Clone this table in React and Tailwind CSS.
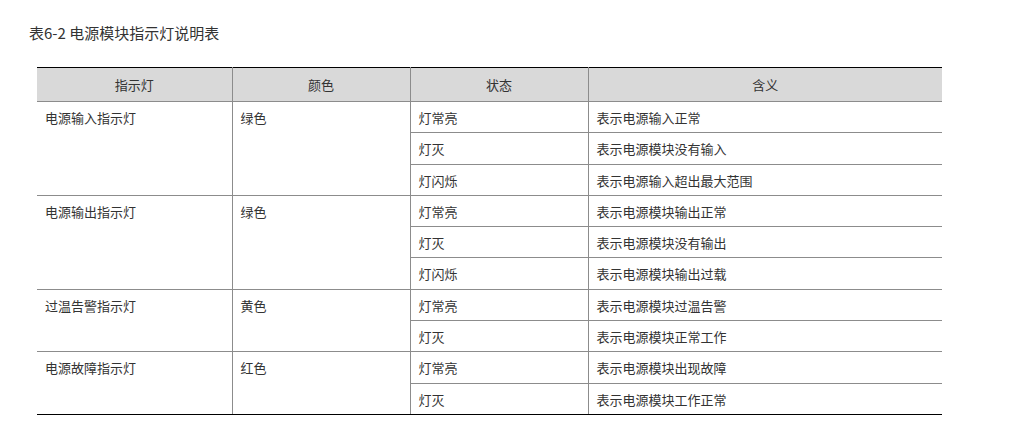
import React from 'react';

const groups = [
  {
    name: '电源输入指示灯',
    color: '绿色',
    rows: [
      ['灯常亮', '表示电源输入正常'],
      ['灯灭', '表示电源模块没有输入'],
      ['灯闪烁', '表示电源输入超出最大范围'],
    ],
  },
  {
    name: '电源输出指示灯',
    color: '绿色',
    rows: [
      ['灯常亮', '表示电源模块输出正常'],
      ['灯灭', '表示电源模块没有输出'],
      ['灯闪烁', '表示电源模块输出过载'],
    ],
  },
  {
    name: '过温告警指示灯',
    color: '黄色',
    rows: [
      ['灯常亮', '表示电源模块过温告警'],
      ['灯灭', '表示电源模块正常工作'],
    ],
  },
  {
    name: '电源故障指示灯',
    color: '红色',
    rows: [
      ['灯常亮', '表示电源模块出现故障'],
      ['灯灭', '表示电源模块工作正常'],
    ],
  },
];

const cell = 'border border-[#8c8c8c] px-2 align-top h-[31.3px] pt-[2px] leading-[28px]';

export default function App() {
  return (
    <div
      className="w-[1015px] h-[422px] bg-white text-[#333] text-[13px]"
      style={{ fontFamily: '"Noto Sans CJK SC", "Liberation Sans", sans-serif' }}
    >
      <div className="pt-[24px] pl-[29px] text-[15px] leading-[18px]">表6-2 电源模块指示灯说明表</div>
      <table className="ml-[37px] mt-[25px] w-[905px] border-collapse border-t-[1.5px] border-t-black border-b-[1.5px] border-b-black table-fixed">
        <colgroup>
          <col className="w-[195px]" />
          <col className="w-[178px]" />
          <col className="w-[178px]" />
          <col className="w-[354px]" />
        </colgroup>
        <thead>
          <tr className="bg-[#d9d9d9]">
            {['指示灯', '颜色', '状态', '含义'].map((h) => (
              <th
                key={h}
                className="border-x border-b border-x-[#8c8c8c] border-b-[#8c8c8c] border-t border-t-black font-normal h-[34px] text-center first:border-l-0 last:border-r-0"
              >
                {h}
              </th>
            ))}
          </tr>
        </thead>
        <tbody>
          {groups.map((g, gi) =>
            g.rows.map((r, ri) => {
              const last = gi === groups.length - 1 && ri === g.rows.length - 1;
              return (
                <tr key={gi + '-' + ri}>
                  {ri === 0 && (
                    <>
                      <td rowSpan={g.rows.length} className={cell + ' border-l-0' + (gi === groups.length - 1 ? ' border-b-black' : '')}>
                        {g.name}
                      </td>
                      <td rowSpan={g.rows.length} className={cell + (gi === groups.length - 1 ? ' border-b-black' : '')}>
                        {g.color}
                      </td>
                    </>
                  )}
                  <td className={cell + (last ? ' border-b-black' : '')}>{r[0]}</td>
                  <td className={cell + ' border-r-0' + (last ? ' border-b-black' : '')}>{r[1]}</td>
                </tr>
              );
            })
          )}
        </tbody>
      </table>
    </div>
  );
}
